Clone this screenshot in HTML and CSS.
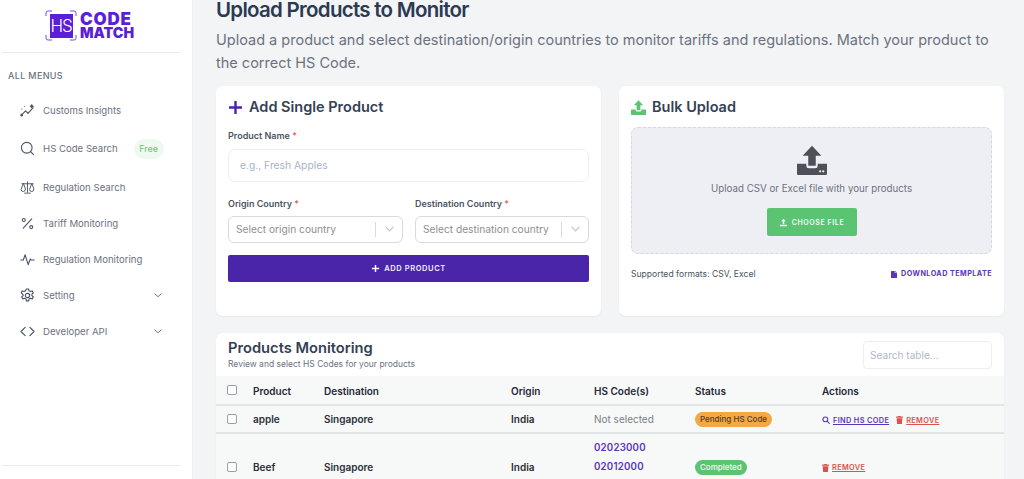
FILE: index.html
```html
<!DOCTYPE html>
<html lang="en">
<head>
<meta charset="utf-8">
<title>Upload Products to Monitor</title>
<link rel="stylesheet" href="styles.css">
</head>
<body>
<div class="app">
  <aside class="sidebar">
    <div class="logo">
      <div class="logo-mark">
        <svg class="logo-corners" viewBox="0 0 32 31" width="32" height="31" fill="none" stroke="#7b4be8" stroke-width="1"><path d="M1 6V3a2 2 0 0 1 2-2h4M25 1h4a2 2 0 0 1 2 2v3M31 25v3a2 2 0 0 1-2 2h-4M7 30H3a2 2 0 0 1-2-2v-3"/></svg>
        <span class="logo-hs">HS</span>
      </div>
      <div class="logo-text"><span class="l1">CODE</span><span class="l2">MATCH</span></div>
    </div>
    <div class="menu-title">ALL MENUS</div>
    <nav class="menu">
      <a class="menu-item"><svg class="ico" viewBox="0 0 16 16" fill="none" stroke="#4b5563" stroke-width="1.2" stroke-linecap="round" stroke-linejoin="round"><path d="M1.500 13 6 8.500l2.500 2.500L14 5"/><path d="M2 6.500h.01M5 3.500h.01M12.500 2l.5 1 1 .5-1 .5-.5 1-.5-1-1-.5 1-.5z"/><circle cx="1.800" cy="13" r=".9" fill="#4b5563"/></svg><span>Customs Insights</span></a>
      <a class="menu-item tall"><svg class="ico" viewBox="0 0 16 16" fill="none" stroke="#4b5563" stroke-width="1.200" stroke-linecap="round"><circle cx="7.200" cy="7.200" r="5.700"/><path d="m11.500 11.500 3 3"/></svg><span>HS Code Search</span><em class="free">Free</em></a>
      <a class="menu-item"><svg class="ico" viewBox="0 0 16 16" fill="none" stroke="#4b5563" stroke-width="1" stroke-linecap="round" stroke-linejoin="round"><path d="M8 2v11M5 14h6M2 4h12"/><path d="M3.500 4 1.200 10a2.300 2.300 0 0 0 4.600 0zM12.500 4l-2.300 6a2.300 2.300 0 0 0 4.600 0z"/></svg><span>Regulation Search</span></a>
      <a class="menu-item"><svg class="ico" viewBox="0 0 16 16" fill="none" stroke="#4b5563" stroke-width="1.200" stroke-linecap="round"><path d="M12.500 3 3.500 13"/><circle cx="4" cy="4.200" r="1.600"/><circle cx="12" cy="11.800" r="1.600"/></svg><span>Tariff Monitoring</span></a>
      <a class="menu-item"><svg class="ico" viewBox="0 0 16 16" fill="none" stroke="#4b5563" stroke-width="1.200" stroke-linecap="round" stroke-linejoin="round"><path d="M.8 8.500h2.700L5.500 3l3.200 10.500L11 7.500l.8 1h3.400"/></svg><span>Regulation Monitoring</span></a>
      <a class="menu-item"><svg class="ico" viewBox="0 0 16 16" fill="none" stroke="#4b5563" stroke-width="1.200" stroke-linejoin="round"><circle cx="8" cy="8" r="2.300"/><path d="M6.800 1h2.400l.4 2 1.500.8 1.900-.7 1.200 2-1.500 1.400v1.700l1.500 1.400-1.200 2-1.900-.7-1.500.8-.4 2H6.800l-.4-2-1.500-.8-1.900.7-1.200-2 1.500-1.400V7.000L1.300 5.100l1.200-2 1.900.7 1.500-.8z"/></svg><span>Setting</span><svg class="caret" viewBox="0 0 10 6" fill="none" stroke="#6b7280" stroke-width="1.200" stroke-linecap="round" stroke-linejoin="round"><path d="m1 1 4 3.500L9 1"/></svg></a>
      <a class="menu-item"><svg class="ico" viewBox="0 0 16 16" fill="none" stroke="#4b5563" stroke-width="1.200" stroke-linecap="round" stroke-linejoin="round"><path d="M5.500 3.500 1 8l4.500 4.500M10.500 3.500 15 8l-4.500 4.500"/></svg><span>Developer API</span><svg class="caret" viewBox="0 0 10 6" fill="none" stroke="#6b7280" stroke-width="1.200" stroke-linecap="round" stroke-linejoin="round"><path d="m1 1 4 3.500L9 1"/></svg></a>
    </nav>
    <div class="sidebar-foot"></div>
  </aside>
  <main class="main">
    <h1 class="page-title">Upload Products to Monitor</h1>
    <p class="page-sub">Upload a product and select destination/origin countries to monitor tariffs and regulations. Match your product to the correct HS Code.</p>
    <div class="cards">
      <section class="card">
        <h2 class="card-title"><svg class="title-ico" viewBox="0 0 14 14" fill="#4a25aa"><path d="M5.700 0h2.600v5.700H14v2.600H8.300V14H5.700V8.300H0V5.700h5.700z"/></svg>Add Single Product</h2>
        <label class="label">Product Name <b>*</b></label>
        <div class="input">e.g., Fresh Apples</div>
        <div class="two">
          <div>
            <label class="label">Origin Country <b>*</b></label>
            <div class="select"><span>Select origin country</span><i></i><svg viewBox="0 0 10 6" fill="none" stroke="#c4c4c4" stroke-width="1.300" stroke-linecap="round" stroke-linejoin="round"><path d="m1 1 4 4 4-4"/></svg></div>
          </div>
          <div>
            <label class="label">Destination Country <b>*</b></label>
            <div class="select"><span>Select destination country</span><i></i><svg viewBox="0 0 10 6" fill="none" stroke="#c4c4c4" stroke-width="1.300" stroke-linecap="round" stroke-linejoin="round"><path d="m1 1 4 4 4-4"/></svg></div>
          </div>
        </div>
        <button class="btn-add"><svg viewBox="0 0 10 10" fill="#fff"><path d="M4.200 1h1.600v3.200H9v1.600H5.800V9H4.200V5.800H1V4.200h3.200z"/></svg>ADD PRODUCT</button>
      </section>
      <section class="card">
        <h2 class="card-title"><svg class="title-ico up" viewBox="0 0 24 24" fill="#5bc473"><path d="M12 .5 4.500 8.500h4.500V16.500h6V8.500h4.500zM0 15h7.500v1.500a2 2 0 0 0 2 2h5a2 2 0 0 0 2-2V15H24v8a1 1 0 0 1-1 1H1a1 1 0 0 1-1-1z"/></svg>Bulk Upload</h2>
        <div class="drop">
          <svg class="drop-ico" viewBox="0 0 24 24" fill="#4d5157"><path d="M12 .500 4.500 8.500h4.500V16.500h6V8.500h4.500zM0 15h7.500v1.500a2 2 0 0 0 2 2h5a2 2 0 0 0 2-2V15H24v8a1 1 0 0 1-1 1H1a1 1 0 0 1-1-1z"/><circle cx="18.500" cy="21" r=".9" fill="#eeeff4"/><circle cx="21" cy="21" r=".9" fill="#eeeff4"/></svg>
          <p class="drop-text">Upload CSV or Excel file with your products</p>
          <button class="btn-file"><svg viewBox="0 0 24 24" fill="#fff"><path d="M12 2 6 8.500h4V16h4V8.500h4zM3 18h18v4H3z"/></svg>CHOOSE FILE</button>
        </div>
        <div class="drop-foot">
          <span>Supported formats: CSV, Excel</span>
          <a class="tpl"><svg viewBox="0 0 12 14" fill="#5a35b8"><path d="M1 0h6.500v4H12v9a1 1 0 0 1-1 1H1a1 1 0 0 1-1-1V1a1 1 0 0 1 1-1zm7.500 0L12 3H8.500z"/></svg>DOWNLOAD TEMPLATE</a>
        </div>
      </section>
    </div>
    <section class="card table-card">
      <div class="table-head">
        <div>
          <h2 class="table-title">Products Monitoring</h2>
          <p class="table-sub">Review and select HS Codes for your products</p>
        </div>
        <div class="search">Search table...</div>
      </div>
      <table class="table">
        <colgroup><col class="c1"><col class="c2"><col class="c3"><col class="c4"><col class="c5"><col class="c6"><col></colgroup>
        <thead>
          <tr><th><span class="check"></span></th><th>Product</th><th>Destination</th><th>Origin</th><th>HS Code(s)</th><th>Status</th><th>Actions</th></tr>
        </thead>
        <tbody>
          <tr class="row-a">
            <td><span class="check"></span></td><td class="strong">apple</td><td class="strong">Singapore</td><td class="strong">India</td><td class="muted">Not selected</td>
            <td><span class="pill pending">Pending HS Code</span></td>
            <td><a class="act find"><svg viewBox="0 0 12 12" fill="none" stroke="#5a35b8" stroke-width="1.600" stroke-linecap="round"><circle cx="5" cy="5" r="3.600"/><path d="m8 8 3 3"/></svg><u>FIND HS CODE</u></a><a class="act rem"><svg viewBox="0 0 12 14" fill="#d9534f"><path d="M4 0h4l.5 1H12v2H0V1h3.500zM1 4h10l-.7 9a1 1 0 0 1-1 1H2.700a1 1 0 0 1-1-1z"/></svg><u>REMOVE</u></a></td>
          </tr>
          <tr class="row-b">
            <td><span class="check"></span></td><td class="strong">Beef</td><td class="strong">Singapore</td><td class="strong">India</td>
            <td class="codes"><div>02023000</div><div>02012000</div></td>
            <td><span class="pill done">Completed</span></td>
            <td><a class="act rem"><svg viewBox="0 0 12 14" fill="#d9534f"><path d="M4 0h4l.5 1H12v2H0V1h3.500zM1 4h10l-.7 9a1 1 0 0 1-1 1H2.700a1 1 0 0 1-1-1z"/></svg><u>REMOVE</u></a></td>
          </tr>
        </tbody>
      </table>
    </section>
  </main>
</div>
</body>
</html>
```

FILE: styles.css
```css
* { box-sizing: border-box; }
html, body { margin: 0; height: 479px; overflow: hidden; }
body { font-family: Inter, "Liberation Sans", sans-serif; background: #f3f4f6; color: #374151; }
.app { display: flex; height: 479px; overflow: hidden; }

.sidebar { width: 193px; flex: none; background: #fff; border-right: 1px solid #eef0f3; display: flex; flex-direction: column; padding: 0 11px 0 2px; height: 479px; }
.logo { height: 53px; border-bottom: 1px solid #e9ebee; display: flex; gap: 3px; padding: 10px 0 0 43px; }
.logo-mark { position: relative; width: 32px; height: 31px; display: flex; align-items: center; justify-content: center; }
.logo-corners { position: absolute; inset: 0; }
.logo-hs { width: 23px; height: 24px; background: #5a1fd6; color: #fff; font: 300 17px/24px "Inter", sans-serif; letter-spacing: -1.2px; text-align: center; }
.logo-text { display: flex; flex-direction: column; color: #5a1fd6; font-family: Inter, sans-serif; font-weight: 900; padding-top: 2px; }
.l1 { display: block; font-size: 17px; line-height: 14px; letter-spacing: .8px; }
.l2 { display: block; font-size: 14.200px; line-height: 14px; letter-spacing: 0; }
.menu-title { font-size: 9px; font-weight: 500; letter-spacing: .35px; color: #6b7280; padding: 17px 0 0 6px; line-height: 12px; }
.menu { display: flex; flex-direction: column; margin-top: 10px; }
.menu-item { height: 36px; display: flex; align-items: center; padding-left: 18px; font-size: 9.600px; font-weight: 400; color: #6b7280; }
.menu-item.tall { height: 41px; }
.menu-item > span { margin-left: 8px; }
.ico { width: 15px; height: 15px; flex: none; }
.free { margin-left: 16px; background: #eef9f0; color: #5fc478; font-style: normal; font-size: 9px; line-height: 20px; padding: 0 5.500px; border-radius: 10px; }
.caret { width: 8px; height: 5px; margin-left: auto; margin-right: 19px; }
.sidebar-foot { margin-top: auto; border-top: 1px solid #e9ebee; height: 14px; }

.main { flex: 1; min-width: 0; padding: 0 20px 0 23px; height: 479px; overflow: hidden; }
.page-title { margin: -4px 0 0; font-size: 20.500px; line-height: 28px; font-weight: 600; letter-spacing: -.72px; color: #2b3a52; }
.page-sub { margin: 4px 0 0; font-size: 14.500px; line-height: 23px; color: #6b7280; }
.cards { display: grid; grid-template-columns: 385px 385px; gap: 18px; margin-top: 12px; }
.card { background: #fff; border-radius: 7px; padding: 12px; height: 230px; box-shadow: 0 1px 2px rgba(0,0,0,.05); }
.card-title { margin: 0 0 11px; display: flex; align-items: center; gap: 6px; font-size: 14.500px; line-height: 18px; font-weight: 600; color: #344054; }
.card-title + .label { margin-top: 14px; }
.title-ico { width: 13px; height: 13px; margin: 0 1px; }
.title-ico.up { width: 15px; height: 15px; margin: 0; }
.label { display: block; font-size: 9px; line-height: 12px; font-weight: 600; color: #4b5563; }
.label b { color: #e25555; font-weight: 500; }
.input { margin-top: 7px; height: 33px; border: 1px solid #eceef1; border-radius: 7px; padding-left: 11px; font-size: 10.300px; line-height: 31px; color: #a9b3c6; }
.two { display: grid; grid-template-columns: 175px 174px; gap: 12px; margin-top: 16px; }
.select { margin-top: 6px; height: 27px; border: 1px solid #d9dadc; border-radius: 6px; display: flex; align-items: center; padding: 0 0 1px 7px; font-size: 10.200px; color: #8f8f8f; white-space: nowrap; }
.select span { flex: 1; }
.select i { width: 1px; height: 15px; background: #d9dadc; }
.select svg { width: 9px; height: 6px; margin: 0 8px 0 9px; }
.btn-add { margin-top: 12px; width: 100%; height: 27px; border: 0; border-radius: 2px; background: #4a25aa; color: #f3effa; font: 600 7.500px Inter, sans-serif; letter-spacing: .6px; display: flex; align-items: center; justify-content: center; gap: 4px; }
.btn-add svg { width: 9px; height: 9px; }

.drop { height: 127px; background: #eeeff4; border: 1px dashed #d6d8dd; border-radius: 7px; display: flex; flex-direction: column; align-items: center; padding-top: 17px; }
.drop-ico { width: 30px; height: 30px; }
.drop-text { margin: 6px 0 0; font-size: 9.750px; line-height: 16px; color: #6b7280; }
.btn-file { margin-top: 11px; width: 90px; height: 28px; border: 0; border-radius: 2px; background: #5bc473; color: #f2fbf4; font: 600 7px Inter, sans-serif; letter-spacing: .6px; display: flex; align-items: center; justify-content: center; gap: 4px; }
.btn-file svg { width: 9px; height: 9px; }
.drop-foot { margin-top: 14px; display: flex; justify-content: space-between; align-items: center; font-size: 8.600px; line-height: 12px; color: #4b5563; }
.tpl { display: flex; align-items: center; gap: 4px; font-size: 7.200px; font-weight: 700; letter-spacing: .45px; color: #5a35b8; }
.tpl svg { width: 6px; height: 7px; }

.table-card { margin-top: 17px; padding: 0; height: 260px; overflow: hidden; border-radius: 7px 7px 0 0; }
.table-head { height: 43px; padding: 8px 12px 0; display: flex; justify-content: space-between; }
.table-title { margin: 0; font-size: 14.700px; line-height: 15px; font-weight: 600; color: #344054; }
.table-sub { margin: 3px 0 0; font-size: 8.500px; line-height: 11px; color: #6b7280; }
.search { width: 129px; height: 28px; border: 1px solid #eceef1; border-radius: 4px; padding-left: 6px; font-size: 10.100px; line-height: 27px; color: #b0b8c9; }
.table { width: 100%; border-collapse: collapse; table-layout: fixed; background: #f7f8f8; font-size: 10px; color: #1f2937; }
.c1 { width: 37px; } .c2 { width: 71px; } .c3 { width: 187px; } .c4 { width: 83px; } .c5 { width: 101px; } .c6 { width: 127px; }
.table th { height: 29px; padding: 1px 0 0; text-align: left; font-weight: 600; color: #1f2937; border-bottom: 2px solid #e2e5e5; }
.table th:first-child { padding-top: 0; }
.table td { padding: 0; border-bottom: 2px solid #e2e5e5; vertical-align: middle; }
.table th:first-child, .table td:first-child { padding-left: 11px; }
.row-a td { height: 28px; }
.row-b td { padding-top: 2px; }
.row-b td:nth-child(6) { padding-top: 4px; }
.check { display: block; width: 10px; height: 10px; border: 1px solid #9a9ea5; border-radius: 2px; background: #fff; }
.strong { font-weight: 600; color: #2b2f36; }
.muted { color: #7a7f87; }
.row-b .codes { color: #5a35b8; font-weight: 600; font-size: 9.700px; letter-spacing: .2px; padding: 4px 0 21px; }
.codes div { line-height: 19px; }
.pill { display: inline-block; height: 15px; line-height: 15px; padding: 0 5px; border-radius: 8px; font-size: 8px; font-weight: 500; vertical-align: middle; }
.pending { background: #f5a742; color: #4b4033; }
.done { background: #5bc473; color: #f2fbf4; }
.act { display: inline-flex; align-items: center; gap: 3px; font-size: 7.350px; font-weight: 600; letter-spacing: .35px; vertical-align: middle; }
.act svg { width: 7px; height: 8px; }
.find { color: #5a35b8; margin-right: 7px; }
.find svg { width: 8px; height: 8px; }
.rem { color: #d9534f; }
```
